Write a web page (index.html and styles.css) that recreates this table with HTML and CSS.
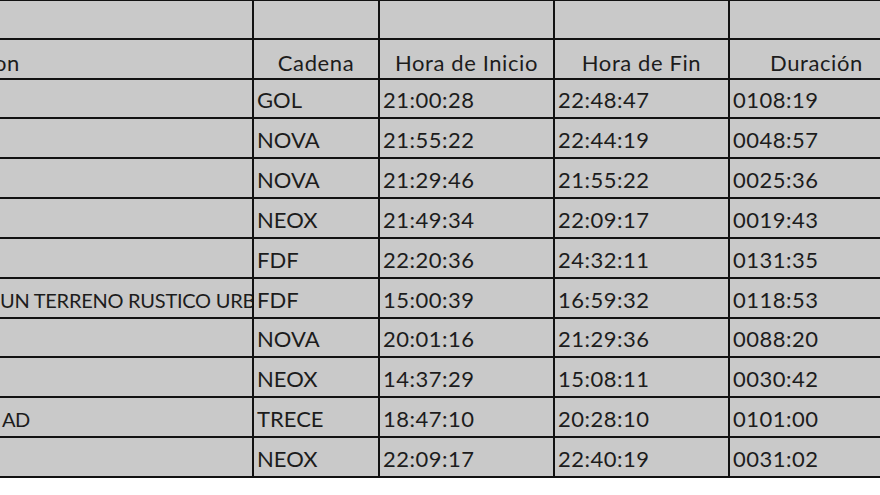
FILE: index.html
```html
<!DOCTYPE html>
<html lang="es">
<head>
<meta charset="utf-8">
<title>Programación</title>
<link rel="stylesheet" href="styles.css">
</head>
<body>
<table class="sheet">
  <colgroup>
    <col class="c1"><col class="c2"><col class="c3"><col class="c4"><col class="c5">
  </colgroup>
  <tbody>
    <tr class="h39"><td class="prog"></td><td></td><td></td><td></td><td></td></tr>
    <tr class="hdr"><td class="prog"><span class="t-hdr">Programacion</span></td><td>Cadena</td><td>Hora de Inicio</td><td>Hora de Fin</td><td>Duración</td></tr>
    <tr class="h39"><td class="prog"></td><td>GOL</td><td>21:00:28</td><td>22:48:47</td><td>0108:19</td></tr>
    <tr><td class="prog"></td><td>NOVA</td><td>21:55:22</td><td>22:44:19</td><td>0048:57</td></tr>
    <tr><td class="prog"></td><td>NOVA</td><td>21:29:46</td><td>21:55:22</td><td>0025:36</td></tr>
    <tr><td class="prog"></td><td>NEOX</td><td>21:49:34</td><td>22:09:17</td><td>0019:43</td></tr>
    <tr><td class="prog"></td><td>FDF</td><td>22:20:36</td><td>24:32:11</td><td>0131:35</td></tr>
    <tr><td class="prog"><span class="t-urb">UN TERRENO RUSTICO URBANIZABLE</span></td><td>FDF</td><td>15:00:39</td><td>16:59:32</td><td>0118:53</td></tr>
    <tr class="h39"><td class="prog"></td><td>NOVA</td><td>20:01:16</td><td>21:29:36</td><td>0088:20</td></tr>
    <tr><td class="prog"></td><td>NEOX</td><td>14:37:29</td><td>15:08:11</td><td>0030:42</td></tr>
    <tr><td class="prog"><span class="t-ad">AD</span></td><td>TRECE</td><td>18:47:10</td><td>20:28:10</td><td>0101:00</td></tr>
    <tr><td class="prog"></td><td>NEOX</td><td>22:09:17</td><td>22:40:19</td><td>0031:02</td></tr>
  </tbody>
</table>
</body>
</html>
```
FILE: styles.css
```css
html, body {
  margin: 0;
  padding: 0;
  background: #ffffff;
  overflow: hidden;
  width: 880px;
  height: 495px;
}

.sheet {
  border-collapse: collapse;
  table-layout: fixed;
  width: 913px;
  margin-left: -10px;
  margin-top: -1px;
  font-family: Lato, "Open Sans", sans-serif;
  font-size: 22px;
  color: #1c1c1c;
  background: #c9c9c9;
}

.c1 { width: 262px; }
.c2 { width: 126px; }
.c3 { width: 175px; }
.c4 { width: 175px; }
.c5 { width: 175px; }

.sheet tr { height: 40px; }
.sheet tr.h39 { height: 39px; }

.sheet td {
  border: 2px solid #111111;
  padding: 3px 0 0 3px;
  white-space: nowrap;
  overflow: hidden;
  vertical-align: middle;
  text-align: left;
  line-height: 24px;
}

.sheet td:nth-child(n+3) {
  letter-spacing: 0.5px;
}

.sheet tr.hdr td {
  text-align: center;
  padding-left: 0;
  padding-top: 7px;
  letter-spacing: 0.6px;
}

.sheet td.prog,
.sheet tr.hdr td.prog {
  text-align: left;
  padding-left: 0;
}

.t-hdr {
  display: inline-block;
  margin-left: -112px;
}

.t-urb {
  display: inline-block;
  margin-left: 8px;
  font-size: 20px;
  letter-spacing: -0.25px;
}

.t-ad {
  display: inline-block;
  margin-left: 10px;
  font-size: 20px;
  letter-spacing: -0.5px;
}
```
